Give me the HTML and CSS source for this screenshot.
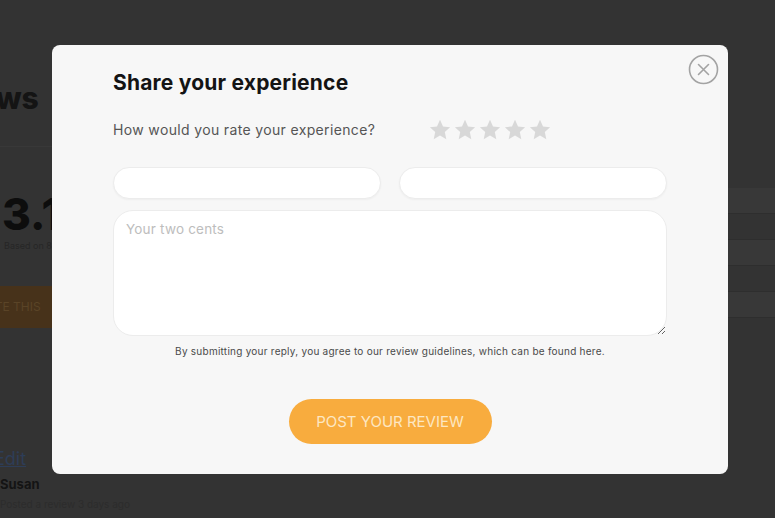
FILE: index.html
```html
<html lang="en">
<head>
    <meta charset="UTF-8">
    <meta name="viewport" content="width=device-width, initial-scale=1.0">
    <title>Reviews</title>
    <link rel="stylesheet" href="styles.css">
</head>
<body>
    <div class="page">
        <div class="side">
            <h1 class="side-title">Reviews</h1>
            <div class="side-rule"></div>
            <div class="score">3.1</div>
            <div class="score-note">Based on 8 reviews</div>
            <div class="write-btn">WRITE THIS</div>
            <a class="edit-link" href="#">Edit</a>
            <div class="author">Susan</div>
            <div class="meta">Posted a review 3 days ago</div>
        </div>
        <div class="main">
            <div class="bar-row light"></div>
            <div class="bar-row"></div>
            <div class="bar-row light"></div>
            <div class="bar-row"></div>
            <div class="bar-row light"></div>
        </div>
    </div>

    <div class="overlay">
        <div class="modal">
            <button class="close-btn" aria-label="Close">
                <svg width="31" height="31" viewBox="0 0 31 31">
                    <circle cx="15.5" cy="15.5" r="14" fill="none" stroke="#a3a3a3" stroke-width="1.6"/>
                    <path d="M10.5 10.5 L20.5 20.5 M20.5 10.5 L10.5 20.5" stroke="#a3a3a3" stroke-width="1.6" stroke-linecap="round"/>
                </svg>
            </button>
            <h2 class="modal-title">Share your experience</h2>
            <div class="rate-row">
                <span class="rate-label">How would you rate your experience?</span>
                <div class="stars">
                    <svg class="star" viewBox="0 0 24 24"><path d="M12 1.8l3 6.6 7.1.8-5.3 4.9 1.5 7.1L12 17.6l-6.3 3.6 1.5-7.1L1.9 9.2 9 8.4z"/></svg>
                    <svg class="star" viewBox="0 0 24 24"><path d="M12 1.8l3 6.6 7.1.8-5.3 4.9 1.5 7.1L12 17.6l-6.3 3.6 1.5-7.1L1.9 9.2 9 8.4z"/></svg>
                    <svg class="star" viewBox="0 0 24 24"><path d="M12 1.8l3 6.6 7.1.8-5.3 4.9 1.5 7.1L12 17.6l-6.3 3.6 1.5-7.1L1.9 9.2 9 8.4z"/></svg>
                    <svg class="star" viewBox="0 0 24 24"><path d="M12 1.8l3 6.6 7.1.8-5.3 4.9 1.5 7.1L12 17.6l-6.3 3.6 1.5-7.1L1.9 9.2 9 8.4z"/></svg>
                    <svg class="star" viewBox="0 0 24 24"><path d="M12 1.8l3 6.6 7.1.8-5.3 4.9 1.5 7.1L12 17.6l-6.3 3.6 1.5-7.1L1.9 9.2 9 8.4z"/></svg>
                </div>
            </div>
            <div class="field-row">
                <input type="text" class="field">
                <input type="text" class="field">
            </div>
            <textarea class="message" placeholder="Your two cents"></textarea>
            <p class="fine-print">By submitting your reply, you agree to our review guidelines, which can be found here.</p>
            <div class="actions">
                <button class="post-btn">POST YOUR REVIEW</button>
            </div>
        </div>
    </div>
</body>
</html>
```

FILE: styles.css
```css
body {
    margin: 0;
    background: #333333;
    font-family: Inter, "Noto Sans", sans-serif;
    overflow: hidden;
}
.page {
    display: flex;
    height: 518px;
}
.side {
    width: 60px;
    flex-shrink: 0;
    padding-top: 80px;
}
.side-title {
    margin: 0 0 0 -86px;
    font-size: 30px;
    font-weight: 800;
    color: #141414;
    white-space: nowrap;
}
.side-rule {
    height: 1px;
    background: #383838;
    margin: 30px 0 0;
}
.score {
    margin: 45px 0 0 2px;
    font-size: 44px;
    font-weight: 800;
    color: #0d0d0d;
    line-height: 1;
}
.score-note {
    margin: 4px 0 0 4px;
    font-size: 9px;
    color: #262626;
    white-space: nowrap;
}
.write-btn {
    margin-top: 35px;
    height: 42px;
    background: #47321a;
    color: #5a4427;
    font-size: 12px;
    line-height: 42px;
    text-indent: -28px;
    white-space: nowrap;
    overflow: hidden;
}
.edit-link {
    display: block;
    margin: 120px 0 0 -6px;
    font-size: 18px;
    color: #2e3d57;
    text-decoration: underline;
}
.author {
    margin: 7px 0 0 0;
    font-size: 13px;
    font-weight: 700;
    color: #141414;
}
.meta {
    margin-top: 6px;
    font-size: 10px;
    color: #2c2c2c;
    white-space: nowrap;
}
.main {
    flex: 1;
    padding-top: 188px;
}
.bar-row {
    height: 25px;
    border-bottom: 1px solid #2e2e2e;
}
.bar-row.light {
    background: #383838;
}
.overlay {
    position: fixed;
    inset: 0;
    display: flex;
    align-items: center;
    justify-content: center;
    padding-left: 5px;
}
.modal {
    position: relative;
    box-sizing: border-box;
    width: 676px;
    height: 429px;
    padding: 25px 61px 0;
    background: #f7f7f7;
    border-radius: 8px;
}
.close-btn {
    position: absolute;
    top: 9px;
    right: 9px;
    padding: 0;
    border: none;
    background: none;
    width: 31px;
    height: 31px;
    cursor: pointer;
}
.modal-title {
    margin: 0;
    font-size: 21px;
    font-weight: 700;
    color: #141414;
    letter-spacing: 0.2px;
}
.rate-row {
    display: flex;
    align-items: center;
    margin-top: 22px;
    height: 26px;
}
.rate-label {
    font-size: 14px;
    letter-spacing: 0.35px;
    color: #555555;
    width: 315px;
}
.stars {
    display: flex;
    gap: 1px;
}
.star {
    width: 24px;
    height: 24px;
    fill: #d8d8d8;
}
.field-row {
    display: flex;
    gap: 18px;
    margin-top: 24px;
}
.field {
    flex: 1;
    box-sizing: border-box;
    height: 32px;
    border: 1px solid #ececec;
    border-radius: 16px;
    background: #ffffff;
    box-shadow: 0 1px 2px rgba(0, 0, 0, 0.04);
}
.message {
    display: block;
    box-sizing: border-box;
    width: 100%;
    height: 126px;
    margin-top: 11px;
    padding: 10px 12px;
    border: 1px solid #ececec;
    border-radius: 20px;
    background: #ffffff;
    font-family: Inter, "Noto Sans", sans-serif;
    font-size: 13.5px;
    letter-spacing: 0.2px;
    color: #333333;
}
.message::placeholder {
    color: #bdbdbd;
}
.fine-print {
    margin: 9px 0 0;
    text-align: center;
    font-size: 10px;
    letter-spacing: 0.25px;
    color: #4a4a4a;
}
.actions {
    display: flex;
    justify-content: center;
    margin-top: 42px;
}
.post-btn {
    width: 203px;
    height: 45px;
    border: none;
    border-radius: 23px;
    background: #f8ac3e;
    color: #fde7c2;
    font-family: Inter, "Noto Sans", sans-serif;
    font-size: 15px;
    cursor: pointer;
}
```
